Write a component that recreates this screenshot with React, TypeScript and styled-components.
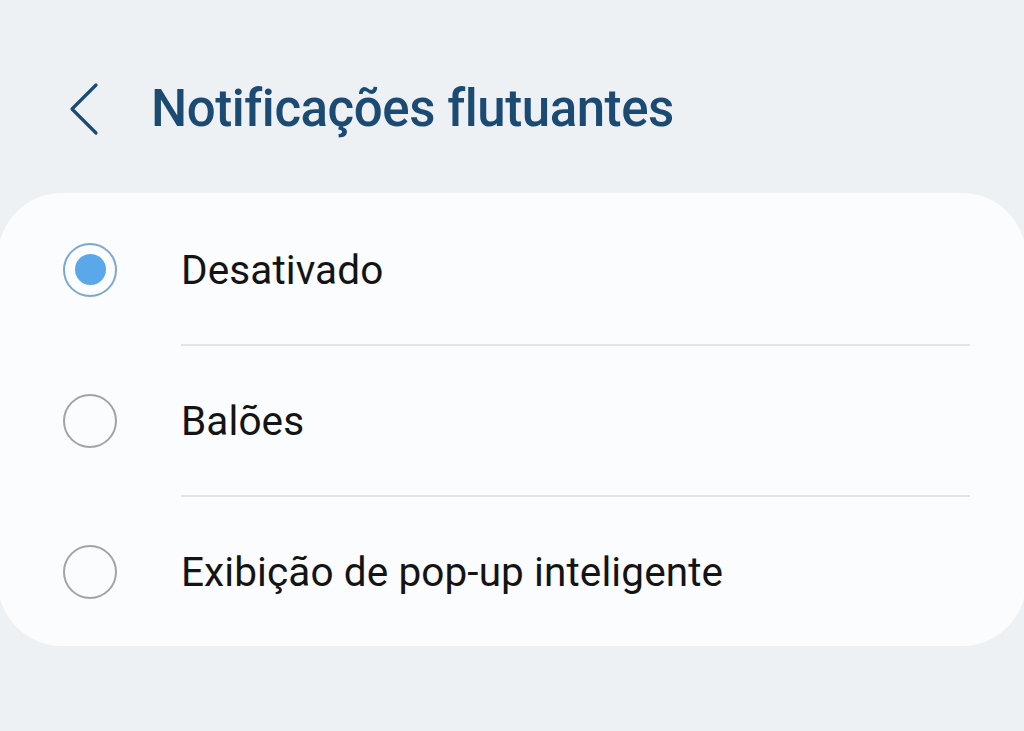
import React, { useState } from "react";
import styled, { createGlobalStyle } from "styled-components";

const Global = createGlobalStyle`
  html, body { margin: 0; padding: 0; }
  body {
    background: #eef1f4;
    font-family: Roboto, "Noto Sans", Arial, sans-serif;
    width: 1024px;
    height: 731px;
    overflow: hidden;
  }
`;

const Page = styled.div`
  display: flex;
  flex-direction: column;
  width: 1024px;
  height: 731px;
  background: #eef1f4;
`;

const Header = styled.header`
  display: flex;
  align-items: center;
  height: 193px;
  padding: 24px 0 0 68px;
  box-sizing: border-box;
  gap: 50px;
`;

const BackButton = styled.button`
  display: flex;
  align-items: center;
  justify-content: center;
  width: 33px;
  height: 54px;
  padding: 0;
  border: none;
  background: transparent;
  cursor: pointer;
`;

const Title = styled.h1`
  margin: 0;
  font-family: Roboto, "Noto Sans", Arial, sans-serif;
  font-weight: 500;
  font-size: 51px;
  letter-spacing: -0.45px;
  color: #1b4b72;
`;

const Card = styled.div`
  display: flex;
  flex-direction: column;
  margin: 0 -2px;
  padding-top: 2px;
  background: #fbfcfd;
  border-radius: 64px;
  overflow: hidden;
`;

const Row = styled.label`
  display: flex;
  align-items: center;
  height: 149px;
  padding-left: 65px;
  gap: 64px;
  cursor: pointer;
`;

const Radio = styled.span<{ $checked: boolean }>`
  flex: none;
  width: 54px;
  height: 54px;
  box-sizing: border-box;
  border-radius: 50%;
  border: 2.5px solid ${(p) => (p.$checked ? "#79a9d3" : "#a3a3a3")};
  display: flex;
  align-items: center;
  justify-content: center;
  &::after {
    content: "";
    display: ${(p) => (p.$checked ? "block" : "none")};
    width: 31px;
    height: 31px;
    border-radius: 50%;
    background: #5aa8ea;
  }
`;

const Label = styled.span`
  font-family: Roboto, "Noto Sans", Arial, sans-serif;
  font-size: 40.5px;
  color: #141414;
  letter-spacing: 0.1px;
`;

const Divider = styled.div`
  height: 2px;
  margin: 0 56px 0 183px;
  background: #e3e4e6;
`;

const options = ["Desativado", "Balões", "Exibição de pop-up inteligente"];

export default function App() {
  const [selected, setSelected] = useState(0);
  return (
    <Page>
      <Global />
      <Header>
        <BackButton aria-label="Voltar">
          <svg width="33" height="54" viewBox="0 0 33 54" fill="none">
            <polyline
              points="28,3 4,27 28,51"
              stroke="#1b4b72"
              strokeWidth="3.2"
              strokeLinecap="round"
              strokeLinejoin="round"
            />
          </svg>
        </BackButton>
        <Title>Notificações flutuantes</Title>
      </Header>
      <Card>
        {options.map((o, i) => (
          <React.Fragment key={o}>
            {i > 0 && <Divider />}
            <Row onClick={() => setSelected(i)}>
              <Radio $checked={selected === i} />
              <Label>{o}</Label>
            </Row>
          </React.Fragment>
        ))}
      </Card>
    </Page>
  );
}
